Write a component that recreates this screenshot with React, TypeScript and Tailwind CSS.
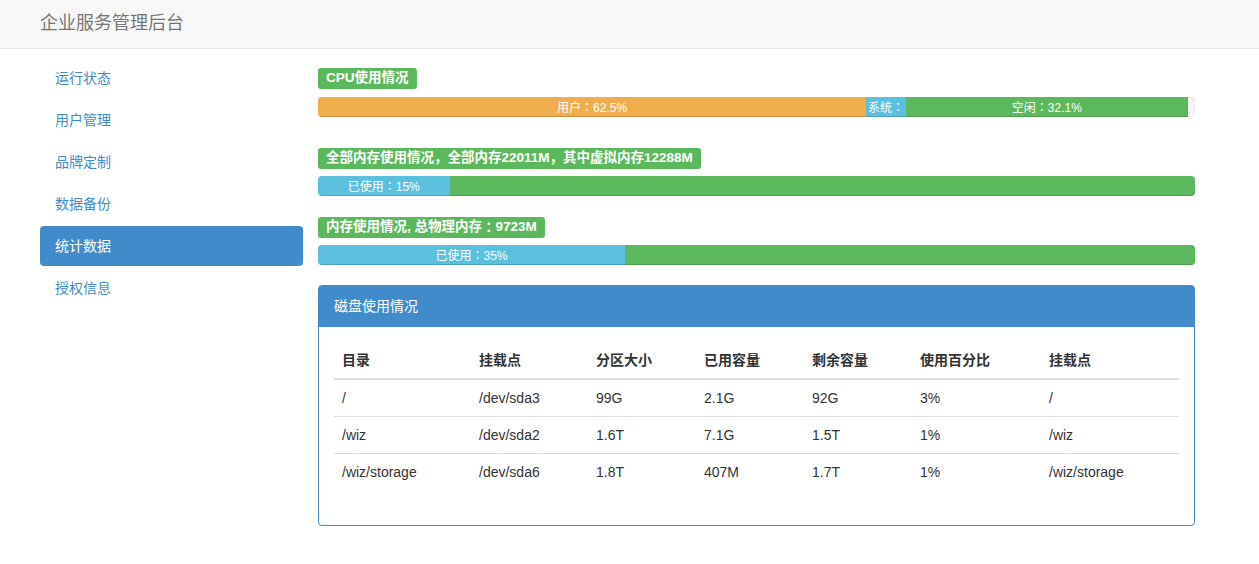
import React from "react";

const FONT = '"Liberation Sans", "Noto Sans CJK SC", sans-serif';

const NAV = ["运行状态", "用户管理", "品牌定制", "数据备份", "统计数据", "授权信息"];
const ACTIVE = "统计数据";

type Segment = { pct: number; color: string; text?: string };

const HEADERS = ["目录", "挂载点", "分区大小", "已用容量", "剩余容量", "使用百分比", "挂载点"];
const COL_W = ["w-[137px]", "w-[117px]", "w-[108px]", "w-[108px]", "w-[108px]", "w-[129px]", ""];

const DISKS = [
  ["/", "/dev/sda3", "99G", "2.1G", "92G", "3%", "/"],
  ["/wiz", "/dev/sda2", "1.6T", "7.1G", "1.5T", "1%", "/wiz"],
  ["/wiz/storage", "/dev/sda6", "1.8T", "407M", "1.7T", "1%", "/wiz/storage"],
];

/* Full-width colon drawn centred, as in the original font. */
function withColon(text: string) {
  const parts = text.split("：");
  return parts.map((p, i) => (
    <React.Fragment key={i}>
      {i > 0 && <span className="font-['Noto_Sans_CJK_TC']">：</span>}
      {p}
    </React.Fragment>
  ));
}

function Label({ text }: { text: string }) {
  return (
    <div className="flex">
      <span className="flex h-[21px] items-center rounded-[3px] bg-[#5cb85c] px-[8px] pb-[1px] text-[13.5px] font-bold leading-none whitespace-nowrap text-white">
        {withColon(text)}
      </span>
    </div>
  );
}

function Progress({ segments }: { segments: Segment[] }) {
  return (
    <div className="flex h-[20px] overflow-hidden rounded-[4px] bg-[#f5f5f5] shadow-[inset_0_1px_2px_rgba(0,0,0,0.1)]">
      {segments.map((s, i) => (
        <div
          key={i}
          className={`${s.color} h-full overflow-hidden text-center text-[12px] leading-[20px] whitespace-nowrap text-white shadow-[inset_0_-1px_0_rgba(0,0,0,0.15)]`}
          style={{ width: `${s.pct}%` }}
        >
          {s.text && withColon(s.text)}
        </div>
      ))}
    </div>
  );
}

export default function App() {
  return (
    <div className="min-h-[564px] bg-white text-[14px] text-[#333]" style={{ fontFamily: FONT }}>
      {/* ---------------- Navbar ---------------- */}
      <div className="h-[49px] border-b border-[#e7e7e7] bg-[#f8f8f8] pl-[40px] pt-[13px]">
        <span className="text-[18px] leading-[20px] text-[#777]">企业服务管理后台</span>
      </div>

      <div className="flex gap-[15px] pl-[40px]">
        {/* ---------------- Sidebar ---------------- */}
        <ul className="mt-[9px] flex w-[263px] flex-col gap-[2px]">
          {NAV.map((item) => (
            <li
              key={item}
              className={
                item === ACTIVE
                  ? "rounded-[4px] bg-[#428bca] px-[15px] py-[10px] leading-[20px] text-white"
                  : "rounded-[4px] px-[15px] py-[10px] leading-[20px] text-[#428bca]"
              }
            >
              {item}
            </li>
          ))}
        </ul>

        {/* ---------------- Main ---------------- */}
        <div className="w-[877px] pt-[19px]">
          <Label text="CPU使用情况" />
          <div className="mt-[8px]">
            <Progress
              segments={[
                { pct: 62.5, color: "bg-[#f0ad4e]", text: "用户：62.5%" },
                { pct: 4.56, color: "bg-[#5bc0de]", text: "系统：" },
                { pct: 32.1, color: "bg-[#5cb85c]", text: "空闲：32.1%" },
              ]}
            />
          </div>

          <div className="mt-[31px]">
            <Label text="全部内存使用情况，全部内存22011M，其中虚拟内存12288M" />
          </div>
          <div className="mt-[7px]">
            <Progress
              segments={[
                { pct: 15, color: "bg-[#5bc0de]", text: "已使用：15%" },
                { pct: 85, color: "bg-[#5cb85c]" },
              ]}
            />
          </div>

          <div className="mt-[21px]">
            <Label text="内存使用情况, 总物理内存：9723M" />
          </div>
          <div className="mt-[7px]">
            <Progress
              segments={[
                { pct: 35, color: "bg-[#5bc0de]", text: "已使用：35%" },
                { pct: 65, color: "bg-[#5cb85c]" },
              ]}
            />
          </div>

          {/* ---------------- Disk panel ---------------- */}
          <div className="mt-[20px] rounded-[4px] border border-[#428bca]">
            <div className="border-b border-[#428bca] bg-[#428bca] px-[15px] py-[10px] leading-[20px] text-white">
              磁盘使用情况
            </div>
            <div className="p-[15px]">
              <table className="mb-[20px] w-full border-collapse text-left">
                <thead>
                  <tr className="border-b-2 border-[#ddd]">
                    {HEADERS.map((h, i) => (
                      <th key={i} className={`${COL_W[i]} p-[8px] leading-[20px] font-bold`}>
                        {h}
                      </th>
                    ))}
                  </tr>
                </thead>
                <tbody>
                  {DISKS.map((row, r) => (
                    <tr key={r} className={r > 0 ? "border-t border-[#ddd]" : ""}>
                      {row.map((c, i) => (
                        <td key={i} className="p-[8px] leading-[20px]">
                          {c}
                        </td>
                      ))}
                    </tr>
                  ))}
                </tbody>
              </table>
            </div>
          </div>
        </div>
      </div>
    </div>
  );
}
